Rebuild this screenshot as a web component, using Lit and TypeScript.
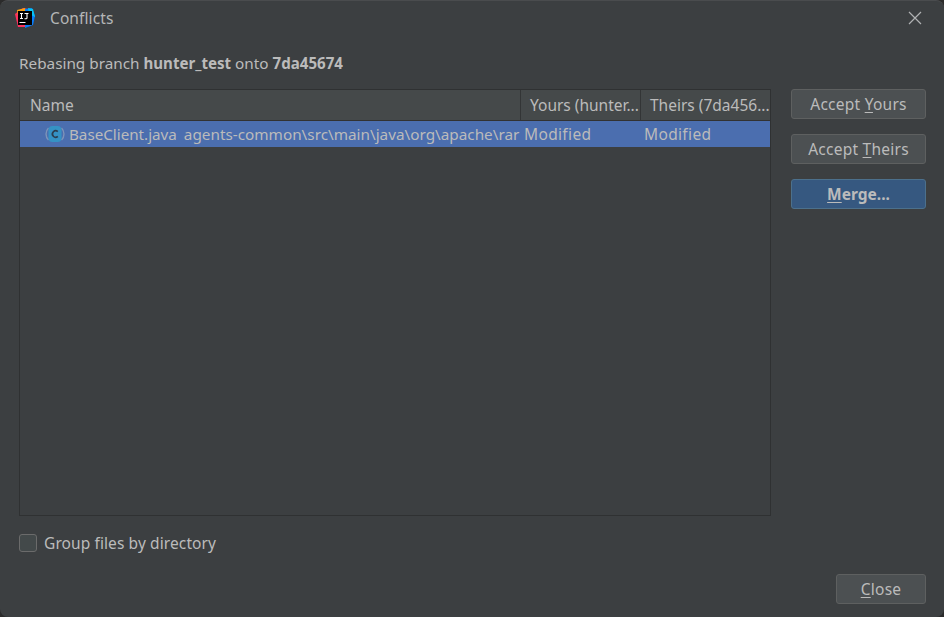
import { LitElement, html, css } from "lit";
import { customElement } from "lit/decorators.js";

@customElement("app-root")
export class AppRoot extends LitElement {
  static styles = css`
    :host { display: block; width: 944px; height: 617px; background: #2b2b2b; font-family: "Noto Sans", "Open Sans", sans-serif; font-size: 15.5px; color: #bbbbbb; }
    * { box-sizing: border-box; }
    .dialog { width: 944px; height: 617px; background: #3c3f41; border-radius: 8px; display: flex; flex-direction: column; padding: 0 18px 13px 19px; overflow: hidden; border-top: 1px solid #4a4c4e; }
    .title { height: 35px; display: flex; align-items: center; margin-left: -4px; flex: none; }
    .title .logo { width: 20px; height: 20px; flex: none; margin-right: 15px; margin-top: -2px; }
    .title .t { flex: 1; line-height: 20px; margin-top: -1px; color: #b4b6b7; letter-spacing: 0.1px; }
    .title .x { width: 14px; height: 14px; flex: none; margin-right: 4px; margin-top: -1px; }
    .sub { height: 20px; line-height: 20px; margin-top: 17px; flex: none; font-size: 15.3px; }
    b { font-weight: 700; font-size: 15.1px; }
    .main { display: flex; gap: 20px; margin-top: 16px; flex: none; }
    .table { width: 752px; height: 427px; border: 1px solid #2f3132; display: flex; flex-direction: column; }
    .head { display: grid; grid-template-columns: 501px 120px 1fr; height: 31px; background: #45494a; border-bottom: 1px solid #323232; flex: none; }
    .head div { line-height: 30px; padding-left: 9px; white-space: nowrap; overflow: hidden; border-right: 1px solid #333536; }
    .head div:first-child { padding-left: 10px; }
    .head div:last-child { border-right: 0; }
    .row { display: grid; grid-template-columns: 501px 120px 1fr; height: 26px; background: #4b6eaf; line-height: 25px; flex: none; }
    .cell { display: flex; align-items: center; white-space: nowrap; overflow: hidden; padding-left: 3px; letter-spacing: 0.35px; }
    .cell.name { padding-left: 25px; letter-spacing: 0; }
    .cell svg { width: 20px; height: 20px; flex: none; margin-right: 4px; }
    .base { font-size: 15.2px; }
    .path { margin-left: 7px; font-size: 15.3px; }
    .side { display: flex; flex-direction: column; gap: 15px; width: 135px; flex: none; }
    .btn { height: 30px; width: 135px; border: 1px solid #5e6060; border-radius: 3px; background: #4c5052; display: flex; align-items: center; justify-content: center; color: #bbbbbb; letter-spacing: 0.25px; padding-bottom: 1px; }
    .btn.primary { background: #365880; border-color: #4c708c; font-weight: 700; letter-spacing: 0; padding-bottom: 0; }
    .btn u { text-underline-offset: 2px; text-decoration-thickness: 1px; }
    .check { display: flex; align-items: center; gap: 7px; margin-top: 16px; height: 22px; flex: none; letter-spacing: 0.1px; }
    .box { width: 18px; height: 18px; border: 1px solid #6b6b6b; border-radius: 3px; background: #43494a; flex: none; }
    .foot { margin-top: auto; display: flex; justify-content: flex-end; }
    .foot .btn { width: 90px; }
  `;

  render() {
    return html`
      <div class="dialog">
        <div class="title">
          <svg class="logo" viewBox="0 0 20 20">
            <path d="M0 6 L8 0 L13 1 L12 19 L3 19 Z" fill="#fe315d"/>
            <path d="M2 2 L10 0 L12 6 L3 8 Z" fill="#f9a012"/>
            <path d="M10 1 L17 0 L20 8 L18 17 L10 20 Z" fill="#087cfa"/>
            <path d="M13 0 L18 1 L20 9 L14 6 Z" fill="#07c3f2"/>
            <rect x="3" y="3" width="14" height="14" fill="#000"/>
            <path d="M5 5.5h3M6.5 5.5v5M5 10.5h3M9.5 5.5h4M12 5.5v4.5q0 .8-1 .8h-1.5" stroke="#fff" stroke-width="1.1" fill="none"/>
            <rect x="4.5" y="14" width="6" height="1" fill="#fff"/>
          </svg>
          <div class="t">Conflicts</div>
          <svg class="x" viewBox="0 0 14 14"><path d="M1 1L13 13M13 1L1 13" stroke="#b0b2b3" stroke-width="1.2"/></svg>
        </div>
        <div class="sub">Rebasing branch <b>hunter_test</b> onto <b>7da45674</b></div>
        <div class="main">
          <div class="table">
            <div class="head">
              <div>Name</div><div>Yours (hunter...</div><div>Theirs (7da456...</div>
            </div>
            <div class="row">
              <div class="cell name">
                <svg viewBox="0 0 20 20">
                  <path d="M3.5 4A8.5 8.5 0 0 0 3.5 16" stroke="#7d93b8" stroke-width="1.4" fill="none"/>
                  <path d="M16.5 4A8.5 8.5 0 0 1 16.5 16" stroke="#7d93b8" stroke-width="1.4" fill="none"/>
                  <rect x="3.5" y="2" width="13" height="16" rx="4" fill="#3592c4"/>
                  <path d="M12.8 7.6A3.2 3.2 0 1 0 12.8 12.4" stroke="#2b3d4f" stroke-width="1.7" fill="none"/>
                </svg>
                <span class="base">BaseClient.java</span><span class="path">agents-common\\src\\main\\java\\org\\apache\\rar</span>
              </div>
              <div class="cell">Modified</div>
              <div class="cell">Modified</div>
            </div>
          </div>
          <div class="side">
            <div class="btn"><span>Accept <u>Y</u>ours</span></div>
            <div class="btn"><span>Accept <u>T</u>heirs</span></div>
            <div class="btn primary"><span><u>M</u>erge...</span></div>
          </div>
        </div>
        <div class="check"><span class="box"></span><span>Group files by directory</span></div>
        <div class="foot"><div class="btn"><span><u>C</u>lose</span></div></div>
      </div>
    `;
  }
}
